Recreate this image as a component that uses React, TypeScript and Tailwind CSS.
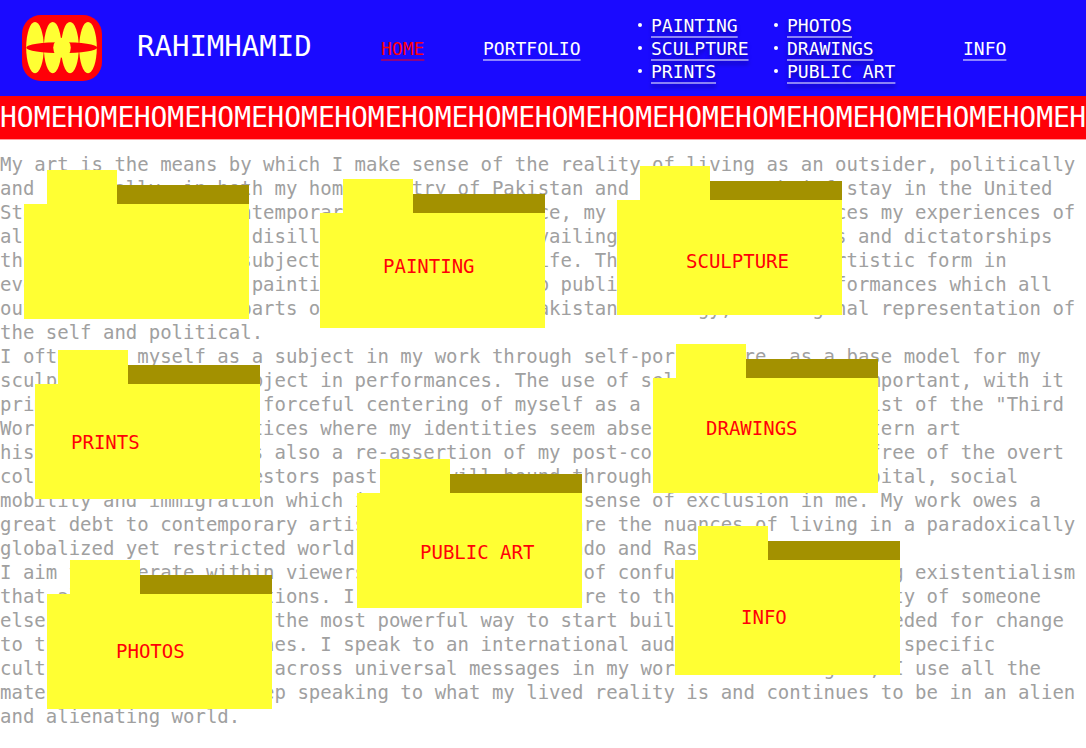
const worksLeft = ["PAINTING", "SCULPTURE", "PRINTS"];
const worksRight = ["PHOTOS", "DRAWINGS", "PUBLIC ART"];

const folders = [
  { label: "", place: "left-[24px] top-[30px]", labelPlace: "" },
  { label: "PAINTING", place: "left-[320px] top-[39px]", labelPlace: "pl-[63px] pt-[41px]" },
  { label: "SCULPTURE", place: "left-[617px] top-[26px]", labelPlace: "pl-[69px] pt-[49px]" },
  { label: "PRINTS", place: "left-[35px] top-[210px]", labelPlace: "pl-[36px] pt-[46px]" },
  { label: "DRAWINGS", place: "left-[653px] top-[204px]", labelPlace: "pl-[53px] pt-[38px]" },
  { label: "PUBLIC ART", place: "left-[357px] top-[319px]", labelPlace: "pl-[63px] pt-[47px]" },
  { label: "PHOTOS", place: "left-[47px] top-[420px]", labelPlace: "pl-[69px] pt-[45px]" },
  { label: "INFO", place: "left-[675px] top-[386px]", labelPlace: "pl-[66px] pt-[45px]" },
];

const statement = `My art is the means by which I make sense of the reality of living as an outsider, politically
and culturally, in both my home country of Pakistan and often on my brief stay in the United
States. Through my contemporary artistic practice, my work always references my experiences of
alienation, anger and disillusionment under prevailing military injustices and dictatorships
through various real subject matters in daily life. The work can assume artistic form in
everything, including painting, sculpture, video public and political performances which all
out to carry certain parts of the history and Pakistan ideology, an original representation of
the self and political.
I often use myself as a subject in my work through self-portraiture, as a base model for my
sculptures and as a subject in performances. The use of self is incredibly important, with it
primarily allowing the forceful centering of myself as a creative active artist of the "Third
World" within art practices where my identities seem absent from much of Western art
history. My practice is also a re-assertion of my post-colonial body living free of the overt
colonial roots our ancestors past that will bound through their political capital, social
mobility and immigration which increases a certain sense of exclusion in me. My work owes a
great debt to contemporary artists whose pieces share the nuances of living in a paradoxically
globalized yet restricted world such as Maria Hurtado and Rashid Rana.
I aim to generate within viewers a deliberate mood of confusion and questioning existentialism
that always provoke emotions. I believe that exposure to the individual identity of someone
else can also be one of the most powerful way to start building communities needed for change
to the many different ones. I speak to an international audience rather than a specific
culture and bring ideas across universal messages in my work about analogies, I use all the
materials so I could keep speaking to what my lived reality is and continues to be in an alien
and alienating world.`;

const linkStyle = "underline decoration-white/50 decoration-2 underline-offset-4";

function Logo() {
  return (
    <svg viewBox="0 0 80 66" className="h-[66px] w-20" role="img" aria-label="Rahim Hamid">
      <rect width="80" height="66" rx="19" fill="#ff0008" />
      <g fill="#ffff33">
        <ellipse cx="13" cy="32.6" rx="8.8" ry="25.7" />
        <ellipse cx="30.7" cy="32.6" rx="8.8" ry="25.7" />
        <ellipse cx="48" cy="32.6" rx="8.8" ry="25.7" />
        <ellipse cx="66" cy="32.6" rx="8.8" ry="25.7" />
      </g>
      <ellipse cx="39.7" cy="32.7" rx="35.5" ry="5.5" fill="#ff0008" />
      <ellipse cx="40" cy="32.7" rx="8.8" ry="10" fill="#ffff33" />
    </svg>
  );
}

function WorkList({ items }: { items: string[] }) {
  return (
    <ul className="[text-shadow:0_3px_4px_rgba(0,0,0,0.35)]">
      {items.map((item) => (
        <li
          key={item}
          className="flex items-center gap-[9px] whitespace-nowrap before:size-1 before:rounded-full before:bg-white before:content-['']"
        >
          <a href="#work" className={linkStyle}>{item}</a>
        </li>
      ))}
    </ul>
  );
}

function Folder({ label, place, labelPlace }: { label: string; place: string; labelPlace: string }) {
  return (
    <a href="#folder" aria-label={label || "Folder"} className={`absolute block w-[225px] ${place}`}>
      <span className="flex h-[34px] items-end pl-[23px]">
        <span className="h-full w-[70px] bg-[#ffff33]" />
        <span className="h-[19px] flex-1 bg-[#a39100]" />
      </span>
      <span className={`block h-[115px] bg-[#ffff33] text-[19px] leading-6 text-[#ff0008] ${labelPlace}`}>
        {label}
      </span>
    </a>
  );
}

export default function App() {
  return (
    <div className="min-h-screen overflow-hidden bg-white font-['DejaVu_Sans_Mono',monospace]">
      <header className="grid h-24 grid-cols-[137fr_244fr_102fr_155fr_136fr_189fr_123fr] items-center bg-[#1a0aff] text-[18px] leading-[23px] text-white">
        <a href="#top" className="pl-[22px]">
          <Logo />
        </a>
        <h1 className="pb-1 text-[29px] leading-8">RAHIMHAMID</h1>
        <a href="#home" className="text-[#ff0008] underline decoration-[#ff0008]/50 decoration-2 underline-offset-4">
          HOME
        </a>
        <a href="#portfolio" className={linkStyle}>PORTFOLIO</a>
        <WorkList items={worksLeft} />
        <WorkList items={worksRight} />
        <a href="#info" className={linkStyle}>INFO</a>
      </header>
      <div className="flex h-11 items-center overflow-hidden border-b border-[#ff9a9d] bg-[#ff0008] text-[28px] leading-8 text-white">
        {Array.from({ length: 16 }, (_, i) => (
          <span key={i} className="min-w-0 flex-1">HOME</span>
        ))}
        <span>H</span>
      </div>
      <main className="relative pt-3">
        <p className="whitespace-pre-line text-[19px] leading-6 text-[#a0a0a0]">{statement}</p>
        {folders.map((folder) => (
          <Folder key={folder.place} {...folder} />
        ))}
      </main>
    </div>
  );
}
